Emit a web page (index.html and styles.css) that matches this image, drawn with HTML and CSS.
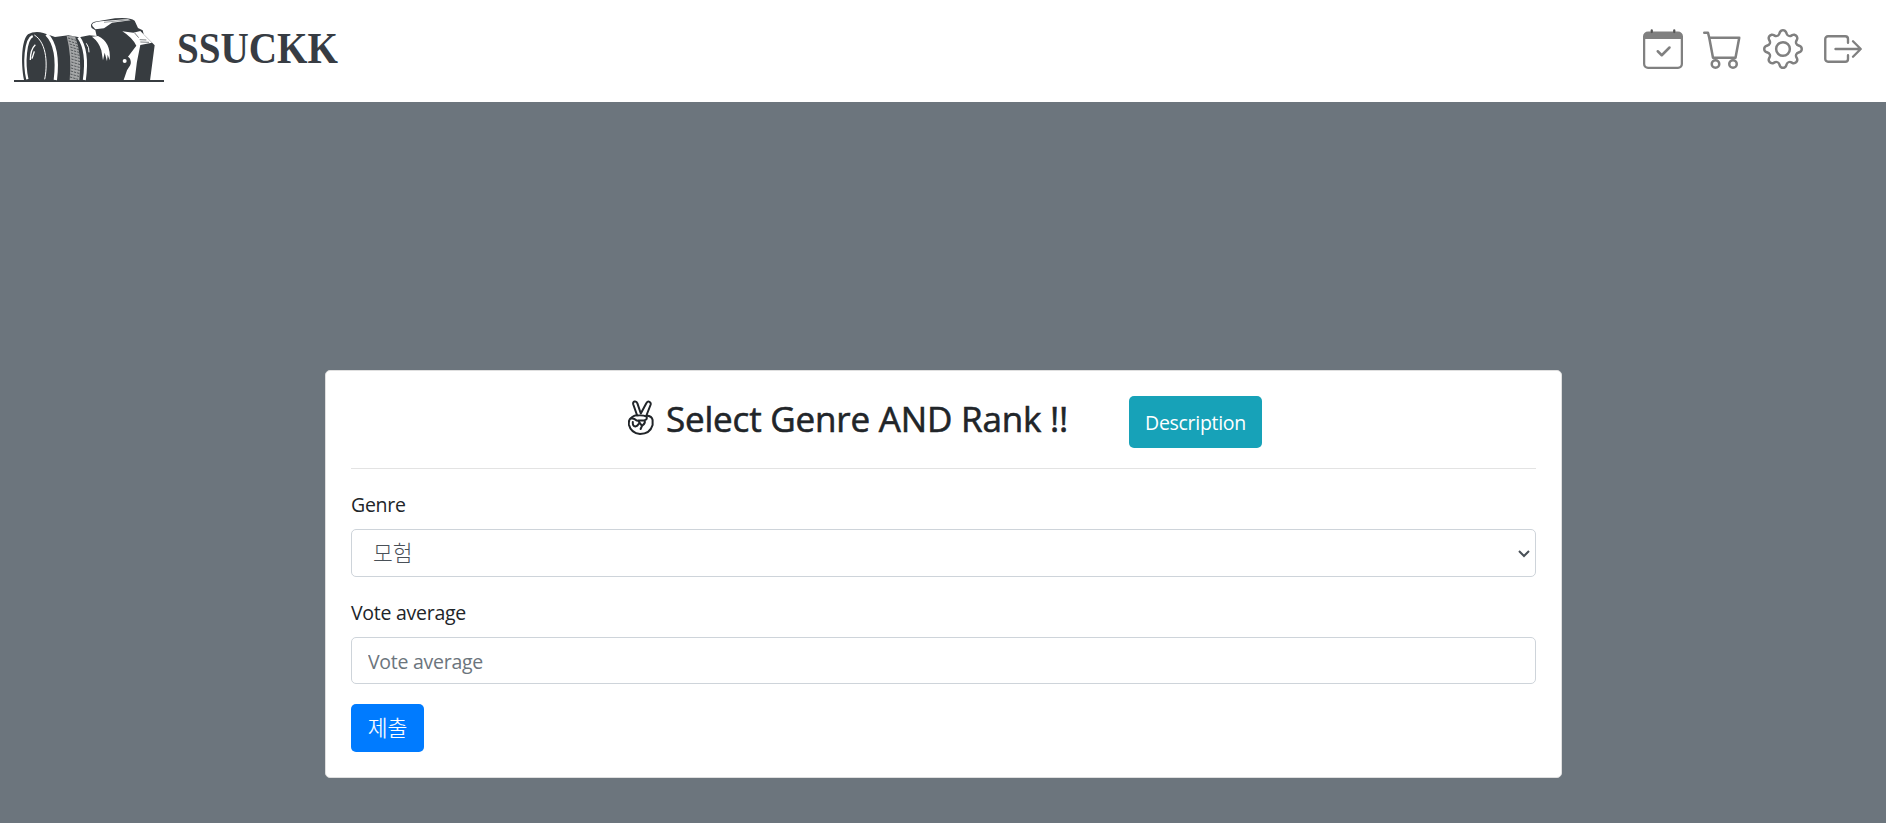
FILE: index.html
```html
<!DOCTYPE html>
<html lang="ko">
<head>
<meta charset="utf-8">
<title>SSUCKK</title>
<link rel="stylesheet" href="styles.css">
</head>
<body>
<header class="navbar">
  <a class="brand">
    <svg class="brand-camera" viewBox="0 0 540 250" aria-hidden="true">
      <g fill="#373c40">
        <path d="M42 240H492V246H42Z"/>
        <path d="M72 240C62 185 65 120 84 103Q104 92 130 99L165 111L205 106L238 112L268 106L290 108L286 91L275 84Q268 70 284 65L345 55Q390 51 404 62L414 84L428 91L431 103L464 136L450 242H72Z"/>
      </g>
      <g fill="none" stroke="#fff">
        <path stroke-width="7" d="M82 238C71 190 76 118 98 108"/>
        <path stroke-width="3" d="M103 105C143 130 142 200 134 238"/>
        <path stroke-width="10" d="M140 103C172 135 172 190 166 240"/>
        <path stroke-width="9" d="M236 112C260 145 260 190 253 240"/>
        <path stroke-width="4" d="M106 134Q91 148 91 180M103 154L96 176"/>
        <path stroke-width="3" d="M259 130Q268 142 267 157"/>
      </g>
      <path fill="#a4a6a7" d="M200 108L225 109Q247 165 238 240H209Q216 170 200 108Z"/>
      <path fill="none" stroke="#53575a" stroke-width="3" stroke-dasharray="7 3" d="M204 114l24 7M206 123l26 8M209 132l26 8M211 141l26 8M212 150l28 8M213 159l28 8M214 168l28 8M214 177l27 8M214 186l27 8M213 195l28 8M213 204l28 8M212 213l28 8M211 222l28 8M210 231l24 7"/>
      <path fill="#fff" d="M276 110L294 108Q334 127 329 181L323 164L321 184L314 158L309 181L304 151Q297 126 276 110Z"/>
      <path fill="#fff" d="M277 78Q271 67 302 64L384 57L392 61L336 68L312 85L286 88Z"/>
      <path fill="none" stroke="#373c40" stroke-width="1.5" d="M312 67L390 59"/>
      <path fill="#fff" d="M367 94L400 98L421 93L456 128L421 135Q409 185 404 240H371L381 211Q401 180 384 170L409 137Q396 112 367 94Z"/>
      <path fill="none" stroke="#373c40" stroke-width="2" d="M421 126l26 1M419 119l20 1M404 99l12 14"/>
      <circle cx="376" cy="189" r="16" fill="#373c40"/>
      <circle cx="374" cy="183" r="6" fill="#fff"/>
    </svg>
    <span class="brand-name">SSUCKK</span>
  </a>
  <nav class="nav-icons">
    <svg class="icon" viewBox="0 0 16 16"><path fill="currentColor" d="M2 1h12a2 2 0 0 1 2 2v11a2 2 0 0 1-2 2H2a2 2 0 0 1-2-2V3a2 2 0 0 1 2-2zM.9 4v9.9a1.2 1.2 0 0 0 1.2 1.2h11.8a1.2 1.2 0 0 0 1.2-1.2V4z"/><path fill="none" stroke="#555" stroke-width=".9" stroke-linecap="round" d="M3.5.5v.7M12.5.5v.7"/><path fill="none" stroke="currentColor" stroke-width="1" stroke-linecap="round" stroke-linejoin="round" d="M5.9 8.9l1.6 1.6 3.1-3.1"/></svg>
    <svg class="icon" viewBox="0 0 16 16"><path fill="currentColor" fill-rule="evenodd" d="M0 1.5A.5.5 0 0 1 .5 1H2a.5.5 0 0 1 .485.379L2.89 3H14.5a.5.5 0 0 1 .491.592l-1.5 8A.5.5 0 0 1 13 12H4a.5.5 0 0 1-.491-.408L2.01 3.607 1.61 2H.5a.5.5 0 0 1-.5-.5zM3.102 4l1.313 7h8.17l1.313-7H3.102zM5 12a2 2 0 1 0 0 4 2 2 0 0 0 0-4zm7 0a2 2 0 1 0 0 4 2 2 0 0 0 0-4zm-7 1a1 1 0 1 1 0 2 1 1 0 0 1 0-2zm7 0a1 1 0 1 1 0 2 1 1 0 0 1 0-2z"/></svg>
    <svg class="icon" viewBox="0 0 16 16"><path fill="currentColor" d="M8 4.754a3.246 3.246 0 1 0 0 6.492 3.246 3.246 0 0 0 0-6.492zM5.754 8a2.246 2.246 0 1 1 4.492 0 2.246 2.246 0 0 1-4.492 0z"/><path fill="currentColor" d="M9.796 1.343c-.527-1.79-3.065-1.79-3.592 0l-.094.319a.873.873 0 0 1-1.255.52l-.292-.16c-1.64-.892-3.433.902-2.54 2.541l.159.292a.873.873 0 0 1-.52 1.255l-.319.094c-1.79.527-1.79 3.065 0 3.592l.319.094a.873.873 0 0 1 .52 1.255l-.16.292c-.892 1.64.901 3.434 2.541 2.54l.292-.159a.873.873 0 0 1 1.255.52l.094.319c.527 1.79 3.065 1.79 3.592 0l.094-.319a.873.873 0 0 1 1.255-.52l.292.16c1.64.893 3.434-.902 2.54-2.541l-.159-.292a.873.873 0 0 1 .52-1.255l.319-.094c1.79-.527 1.79-3.065 0-3.592l-.319-.094a.873.873 0 0 1-.52-1.255l.16-.292c.893-1.64-.902-3.433-2.541-2.54l-.292.159a.873.873 0 0 1-1.255-.52l-.094-.319zm-2.633.283c.246-.835 1.428-.835 1.674 0l.094.319a1.873 1.873 0 0 0 2.693 1.115l.291-.16c.764-.415 1.6.42 1.184 1.185l-.159.292a1.873 1.873 0 0 0 1.116 2.692l.318.094c.835.246.835 1.428 0 1.674l-.319.094a1.873 1.873 0 0 0-1.115 2.693l.16.291c.415.764-.42 1.6-1.185 1.184l-.291-.159a1.873 1.873 0 0 0-2.693 1.116l-.094.318c-.246.835-1.428.835-1.674 0l-.094-.319a1.873 1.873 0 0 0-2.692-1.115l-.292.16c-.764.415-1.6-.42-1.184-1.185l.159-.291A1.873 1.873 0 0 0 1.945 8.93l-.319-.094c-.835-.246-.835-1.428 0-1.674l.319-.094A1.873 1.873 0 0 0 3.06 4.377l-.16-.292c-.415-.764.42-1.6 1.185-1.184l.292.159a1.873 1.873 0 0 0 2.692-1.115l.094-.319z"/></svg>
    <svg class="icon" viewBox="0 0 16 16"><path fill="none" stroke="currentColor" stroke-width=".95" stroke-linecap="round" stroke-linejoin="round" d="M10 5.5V4a1.1 1.1 0 0 0-1.1-1.1H2A1.1 1.1 0 0 0 .9 4v8A1.1 1.1 0 0 0 2 13.1h6.9A1.1 1.1 0 0 0 10 12v-1.5M5 8h10M12 4.9L15.1 8 12 11.1"/></svg>
  </nav>
</header>
<main class="content">
  <section class="card">
    <div class="card-head">
      <h2 class="title"><svg class="victory" viewBox="0 0 26 36" aria-hidden="true"><g fill="none" stroke="#212529" stroke-width="2" stroke-linecap="round" stroke-linejoin="round"><path d="M9 15L5.3 4.5Q4.6 2 6.5 1.5Q8.6 1 9.4 3.4L12.8 13.5L18.3 3.2Q19.7 1 21.5 1.8Q23.3 2.8 22.5 5L18.4 15.5Q24 16 24.6 20V25Q22 34 12 34Q3 33 1 25Q0 20 3.5 17.5Q6 15.5 9 15Z"/><path d="M9 15.5Q15 15 18.6 16.5Q19.6 19.5 16.5 20.3L10 20.6L14 25.8L12.6 29M3.5 18.5Q6 18 8.6 20.5M4.8 22Q4.4 26.2 7.4 26.4Q9.6 26 10.6 24M16.4 20.5Q18 22.5 14.4 25.6"/></g></svg><span class="title-text">Select Genre AND Rank !!</span></h2>
      <button class="btn btn-info" type="button">Description</button>
    </div>
    <form class="form">
      <label class="label" for="genre">Genre</label>
      <div class="control select" id="genre"><span class="hangul">모험</span><svg class="chevron" viewBox="0 0 12 8"><path d="M1 1l5 5 5-5" fill="none" stroke="#495057" stroke-width="2"/></svg></div>
      <label class="label label-vote" for="vote">Vote average</label>
      <input class="control vote" id="vote" placeholder="Vote average">
      <button class="btn btn-primary" type="button"><span class="hangul">제출</span></button>
    </form>
  </section>
</main>
</body>
</html>
```

FILE: styles.css
```css
* { box-sizing: border-box; }
body {
  margin: 0;
  height: 823px;
  overflow: hidden;
  background: #6c757d;
  color: #212529;
  font: 19.5px/30px "Open Sans", "Noto Sans CJK KR", sans-serif;
  letter-spacing: -.27px;
}
.navbar {
  display: flex;
  justify-content: space-between;
  height: 102px;
  padding: 0 23px 0 0;
  background: #fff;
}
.brand { display: flex; }
.brand-camera { width: 180px; height: 83.33px; }
.brand-name {
  height: 50px;
  margin: 23px 0 0 -3px;
  color: #373c43;
  font: bold 44px/52px "Liberation Serif", serif;
  letter-spacing: 0;
  transform: scaleX(.89);
  transform-origin: 0 0;
}
.nav-icons { display: flex; gap: 20px; padding-top: 29px; color: #808080; }
.icon { width: 40px; height: 40px; overflow: visible; }
.content { padding: 268px 324px 0 325px; }
.card {
  height: 408px;
  padding: 25px;
  border: 1px solid #dfdfdf;
  border-radius: 5px;
  background: #fff;
}
.card-head {
  display: flex;
  height: 73px;
  padding-left: 277px;
  border-bottom: 1px solid #e3e3e3;
}
.title { display: flex; width: 501px; margin: 0; font-size: 35px; font-weight: 500; line-height: 45px; }
.victory { width: 26px; height: 36px; margin: 4px 12px 0 0; }
.title-text {
  white-space: nowrap;
  letter-spacing: -.19px;
  -webkit-text-stroke: .6px #212529;
}
.btn {
  display: block;
  padding: 0;
  border: 0;
  border-radius: 5px;
  color: #fff;
  font: inherit;
  letter-spacing: -.3px;
}
.btn-info { width: 133px; height: 52px; padding-top: 2px; background: #17a2b8; }
.btn-primary { width: 73px; height: 48px; margin-top: 20px; background: #007bff; }
.hangul {
  font-family: "Noto Sans CJK KR", sans-serif;
  font-size: 21.5px;
  font-weight: 300;
  letter-spacing: 0;
}
.btn-primary .hangul { -webkit-text-stroke: .2px #fff; }
.form { padding-top: 21px; }
.label { display: block; height: 30px; }
.control {
  width: 100%;
  border: 1px solid #ced4da;
  border-radius: 5px;
  background: #fff;
  color: #495057;
  font: inherit;
  letter-spacing: -.27px;
}
.select {
  display: flex;
  align-items: center;
  justify-content: space-between;
  height: 48px;
  margin-top: 9px;
  padding: 1px 5px 0 21px;
}
.select .hangul { padding-bottom: 4px; }
.chevron { width: 12px; height: 8px; }
.label-vote { margin-top: 21px; }
.vote { display: block; height: 47px; margin-top: 9px; padding: 2px 16px 0; }
.vote::placeholder { color: #6c757d; opacity: 1; }
```
